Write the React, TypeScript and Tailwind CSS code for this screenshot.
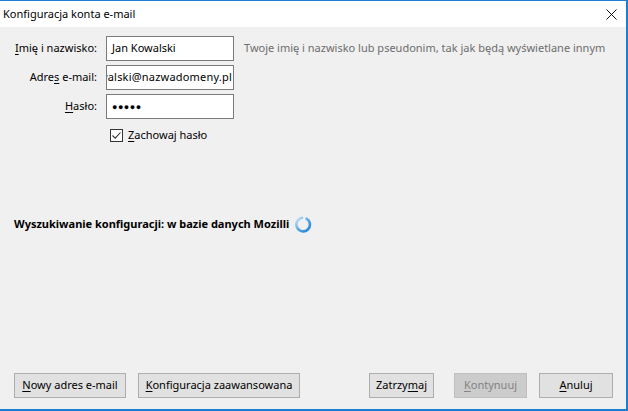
import React from "react";

const font = { fontFamily: '"Noto Sans", "Segoe UI", sans-serif' };

function Key({ children }: { children: React.ReactNode }) {
  return <span className="underline underline-offset-2">{children}</span>;
}

function Button({
  children,
  width,
  disabled = false,
}: {
  children: React.ReactNode;
  width: string;
  disabled?: boolean;
}) {
  return (
    <button
      className={
        disabled
          ? `${width} flex h-[25px] items-center justify-center whitespace-nowrap border border-[#bfbfbf] bg-[#cccccc] text-[11px] text-[#838383]`
          : `${width} flex h-[25px] items-center justify-center whitespace-nowrap border border-[#adadad] bg-[#e1e1e1] text-[11px] text-black`
      }
    >
      {children}
    </button>
  );
}

function Spinner() {
  return (
    <svg width="17" height="17" viewBox="0 0 17 17">
      <defs>
        <linearGradient id="spin" x1="0" y1="0" x2="1" y2="1">
          <stop offset="0" stopColor="#cfe6fa" />
          <stop offset="0.5" stopColor="#5aa9ea" />
          <stop offset="1" stopColor="#1a7fd4" />
        </linearGradient>
      </defs>
      <path
        d="M11.5 2.6 A6.8 6.8 0 1 1 7 1.8"
        fill="none"
        stroke="url(#spin)"
        strokeWidth="2.6"
        strokeLinecap="round"
      />
    </svg>
  );
}

export default function App() {
  return (
    <div
      className="flex h-[411px] w-[628px] flex-col border-t border-r-2 border-b-2 border-[#1a7fd4] bg-[#f0f0f0] text-[11px] text-black"
      style={font}
    >
      {/* title bar */}
      <div className="flex h-[26px] items-center justify-between bg-white pl-[3px] pr-[9px]">
        <span>Konfiguracja konta e-mail</span>
        <svg width="11" height="11" viewBox="0 0 11 11">
          <path d="M0.5 0.5 L10.5 10.5 M10.5 0.5 L0.5 10.5" stroke="#111" strokeWidth="1" />
        </svg>
      </div>

      {/* body */}
      <div className="flex flex-1 flex-col pt-[9px]">
        <div className="grid grid-cols-[97px_128px_1fr] gap-y-[4px]">
          <div className="flex items-center justify-end">
            <span>
              <Key>I</Key>mię i nazwisko:
            </span>
          </div>
          <div className="ml-[9px] flex h-[25px] w-[128px] items-center border border-[#7a7a7a] bg-white pl-[5px]">
            Jan Kowalski
          </div>
          <div className="ml-[19px] flex items-center whitespace-nowrap text-[#6d6d6d]">
            Twoje imię i nazwisko lub pseudonim, tak jak będą wyświetlane innym
          </div>

          <div className="flex items-center justify-end">
            <span>
              Adre<Key>s</Key> e-mail:
            </span>
          </div>
          <div className="ml-[9px] flex h-[25px] w-[128px] items-center justify-end overflow-hidden border border-[#7a7a7a] bg-white pr-[1px]">
            <span className="whitespace-nowrap tracking-[0.2px]">jan.kowalski@nazwadomeny.pl</span>
          </div>
          <div />

          <div className="flex items-center justify-end">
            <span>
              <Key>H</Key>asło:
            </span>
          </div>
          <div className="ml-[9px] flex h-[25px] w-[128px] items-center border border-[#7a7a7a] bg-white pl-[5px] text-[9px] tracking-[0.5px]">
            ●●●●●
          </div>
          <div />
        </div>

        <div className="ml-[110px] mt-[8px] flex items-center gap-[5px]">
          <svg width="13" height="13" viewBox="0 0 13 13">
            <rect x="0.5" y="0.5" width="12" height="12" fill="#fff" stroke="#333" />
            <path d="M2.5 6.5 L5.2 9.2 L10.5 3.5" fill="none" stroke="#333" strokeWidth="1.1" />
          </svg>
          <span>
            <Key>Z</Key>achowaj hasło
          </span>
        </div>

        <div className="ml-[14px] mt-[72px] flex items-center gap-[6px]">
          <span className="font-bold">Wyszukiwanie konfiguracji: w bazie danych Mozilli</span>
          <Spinner />
        </div>

        <div className="mt-auto mb-[11px] flex items-center pl-[14px] pr-[13px]">
          <Button width="w-[112px]">
            <span>
              <Key>N</Key>owy adres e-mail
            </span>
          </Button>
          <div className="ml-[12px]">
            <Button width="w-[162px]">
              <span>
                <Key>K</Key>onfiguracja zaawansowana
              </span>
            </Button>
          </div>
          <div className="ml-auto flex items-center">
            <Button width="w-[65px]">
              <span>
                Zatrzy<Key>m</Key>aj
              </span>
            </Button>
            <div className="ml-[20px]">
              <Button width="w-[73px]" disabled>
                <span>
                  <Key>K</Key>ontynuuj
                </span>
              </Button>
            </div>
            <div className="ml-[12px]">
              <Button width="w-[74px]">
                <span>
                  <Key>A</Key>nuluj
                </span>
              </Button>
            </div>
          </div>
        </div>
      </div>
    </div>
  );
}
